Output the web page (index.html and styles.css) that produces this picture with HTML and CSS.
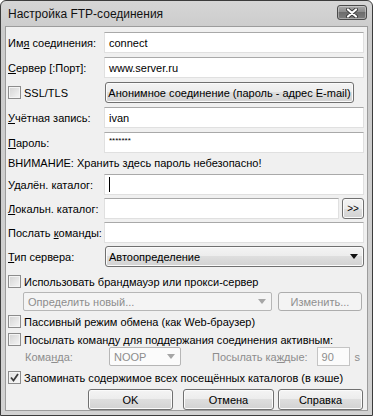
FILE: index.html
```html
<!DOCTYPE html>
<html lang="ru">
<head>
<meta charset="utf-8">
<title>Настройка FTP-соединения</title>
<link rel="stylesheet" href="styles.css">
</head>
<body>
<div class="window">
  <div class="titlebar">
    <span class="title">Настройка FTP-соединения</span>
    <span class="close"><svg width="14" height="10" viewBox="0 0 14 10"><path d="M3 1.5 L11 8.5 M11 1.5 L3 8.5" stroke="#3a3a3a" stroke-width="4" stroke-linecap="round"/><path d="M3 1.5 L11 8.5 M11 1.5 L3 8.5" stroke="#fff" stroke-width="2.2" stroke-linecap="round"/></svg></span>
  </div>
  <div class="client">
    <div class="row"><span class="lbl">Им<u>я</u> соединения:</span><div class="field">connect</div></div>
    <div class="row"><span class="lbl"><u>С</u>ервер [:Порт]:</span><div class="field">www.server.ru</div></div>
    <div class="row"><span class="lbl check"><span class="box"></span>SSL/TLS</span><button class="btn anon">Анонимное соединение (пароль - адрес E-mail)</button></div>
    <div class="row"><span class="lbl"><u>У</u>чётная запись:</span><div class="field">ivan</div></div>
    <div class="row"><span class="lbl"><u>П</u>ароль:</span><div class="field pwd">*******</div></div>
    <div class="note">ВНИМАНИЕ: Хранить здесь пароль небезопасно!</div>
    <div class="row tight"><span class="lbl">У<u>д</u>алён. каталог:</span><div class="field"><span class="caret"></span></div></div>
    <div class="row tight"><span class="lbl"><u>Л</u>окальн. каталог:</span><div class="field"></div><button class="btn more">&gt;&gt;</button></div>
    <div class="row tight"><span class="lbl">Послать <u>к</u>оманды:</span><div class="field"></div></div>
    <div class="row tight"><span class="lbl"><u>Т</u>ип сервера:</span><div class="combo">Автоопределение<span class="arrow"></span></div></div>
    <div class="crow first"><span class="box"></span>Использовать брандмауэр или прокси-сервер</div>
    <div class="proxy">
      <div class="dd proxy-dd">Определить новый...<span class="arrow dim"></span></div>
      <button class="btn disabled edit">Изменить...</button>
    </div>
    <div class="crow"><span class="box"></span>Пассивный режим обмена (как Web-браузер)</div>
    <div class="crow"><span class="box"></span>Посылать команду для поддержания соединения активным:</div>
    <div class="keep">
      <span class="dim-text cmd-lbl">Кома<u>н</u>да:</span>
      <div class="dd noop">NOOP<span class="arrow dim"></span></div>
      <span class="dim-text every">Посылать ка<u>ж</u>дые:</span>
      <div class="secs">90</div>
      <span class="dim-text unit">s</span>
    </div>
    <div class="crow cache"><span class="box checked"><svg width="9" height="9" viewBox="0 0 9 9"><path d="M1 4.5 L3.5 7.5 L8 1" fill="none" stroke="#3b3b3b" stroke-width="1.8"/></svg></span>Запоминать содержимое всех посещённых каталогов (в кэше)</div>
    <div class="actions">
      <button class="btn ok">OK</button>
      <button class="btn cancel">Отмена</button>
      <button class="btn help">Справка</button>
    </div>
  </div>
</div>
</body>
</html>
```

FILE: styles.css
```css
* { box-sizing: border-box; }
html, body { margin: 0; padding: 0; background: #ffffff; }
body {
  font-family: "Liberation Sans", Arial, sans-serif;
  font-size: 11px;
  color: #000;
}
u { text-decoration: underline; text-underline-offset: 1px; }

.window {
  width: 373px;
  height: 416px;
  border: 1px solid #3c3c3c;
  border-radius: 6px 6px 0 0;
  background: linear-gradient(#d6d6d6, #cbcbcb 30px, #d2d2d2);
  padding: 0 4px 4px 4px;
  display: flex;
  flex-direction: column;
}

.titlebar {
  height: 26px;
  display: flex;
  align-items: center;
  justify-content: space-between;
  padding-left: 3px;
}
.title { font-size: 12px; color: #111; }
.close {
  width: 30px;
  height: 15px;
  margin-right: 1px;
  margin-top: -2px;
  border: 1px solid #4a4a4a;
  border-radius: 3px;
  background: linear-gradient(#a8a8a8, #8a8a8a 50%, #6c6c6c 50%, #7e7e7e);
  display: flex;
  align-items: center;
  justify-content: center;
  box-shadow: inset 0 0 0 1px rgba(255,255,255,0.35);
}

.client {
  flex: 1;
  background: #f0f0f0;
  border: 1px solid #9c9c9c;
  padding: 5px 3px 0 2px;
  display: flex;
  flex-direction: column;
}

.row {
  display: flex;
  align-items: center;
  height: 21px;
  margin-bottom: 4px;
  flex: none;
}
.row.tight { margin-bottom: 3px; }
.lbl {
  width: 96px;
  flex: none;
  white-space: nowrap;
}
.field {
  flex: 1;
  height: 21px;
  background: #fff;
  border: 1px solid #e0e0e0;
  border-top-color: #a9a9a9;
  padding: 0 4px;
  display: flex;
  align-items: center;
  white-space: nowrap;
}
.field.pwd { font-size: 8px; align-items: flex-start; padding-top: 3px; }
.caret { display: block; width: 1px; height: 15px; background: #000; }

.note { height: 16px; line-height: 16px; margin: -2px 0 3px; white-space: nowrap; }

.check, .crow { display: flex; align-items: center; }
.box {
  width: 13px;
  height: 13px;
  flex: none;
  border: 1px solid #8c8c8c;
  background: linear-gradient(135deg, #d3d3d3, #f6f6f6);
  box-shadow: inset 0 0 0 1px #f4f4f4;
  margin-right: 3px;
  display: flex;
  align-items: center;
  justify-content: center;
}
.box.checked { background: linear-gradient(135deg, #e2e2e2, #f8f8f8); }

.btn {
  font: inherit;
  color: #000;
  border: 1px solid #707070;
  border-radius: 3px;
  background: linear-gradient(#f4f4f4, #ececec 50%, #dedede 50%, #d2d2d2);
  box-shadow: inset 0 0 0 1px #fbfbfb;
  padding: 0;
  height: 21px;
  white-space: nowrap;
}
.btn.disabled {
  color: #8f8f8f;
  border-color: #adadad;
  background: #f4f4f4;
  box-shadow: none;
}
.anon { width: 249px; margin-left: 1px; }
.more { width: 22px; height: 21px; margin-left: 3px; font-size: 10px; }

.combo {
  flex: 1;
  height: 21px;
  margin-left: 1px;
  border: 1px solid #707070;
  border-radius: 3px;
  background: linear-gradient(#f4f4f4, #ececec 50%, #dedede 50%, #d2d2d2);
  box-shadow: inset 0 0 0 1px #fbfbfb;
  display: flex;
  align-items: center;
  justify-content: space-between;
  padding: 0 3px 0 3px;
}
.arrow {
  width: 0;
  height: 0;
  border-left: 4px solid transparent;
  border-right: 4px solid transparent;
  border-top: 5px solid #111;
  margin-right: 2px;
}
.arrow.dim { border-top-color: #a6a6a6; }

.crow { height: 15px; flex: none; white-space: nowrap; }
.crow.first { margin-top: 4px; }
.crow + .crow { margin-top: 3px; }

.proxy {
  display: flex;
  align-items: center;
  margin: 3px 0 3px 15px;
  height: 19px;
  flex: none;
}
.dd {
  height: 19px;
  border: 1px solid #b6b6b6;
  border-radius: 2px;
  background: #f4f4f4;
  color: #8d8d8d;
  display: flex;
  align-items: center;
  justify-content: space-between;
  padding: 0 3px 0 4px;
}
.proxy-dd { width: 249px; }
.edit { width: 84px; height: 19px; margin-left: 6px; }

.keep {
  display: flex;
  align-items: center;
  height: 19px;
  flex: none;
}
.dim-text { color: #8d8d8d; white-space: nowrap; }
.cmd-lbl { margin-left: 17px; width: 84px; }
.noop { width: 72px; background: #fbfbfb; }
.every { margin-left: 31px; }
.secs {
  width: 33px;
  height: 19px;
  margin-left: 9px;
  border: 1px solid #c4c4c4;
  background: #fbfbfb;
  color: #8d8d8d;
  padding-left: 4px;
  display: flex;
  align-items: center;
}
.unit { margin-left: 5px; }

.crow.cache { margin-top: 4px; }

.actions {
  display: flex;
  justify-content: flex-end;
  margin-top: 4px;
  padding-right: 1px;
}
.ok { width: 85px; }
.cancel { width: 91px; margin-left: 10px; }
.help { width: 85px; margin-left: 4px; }
```
